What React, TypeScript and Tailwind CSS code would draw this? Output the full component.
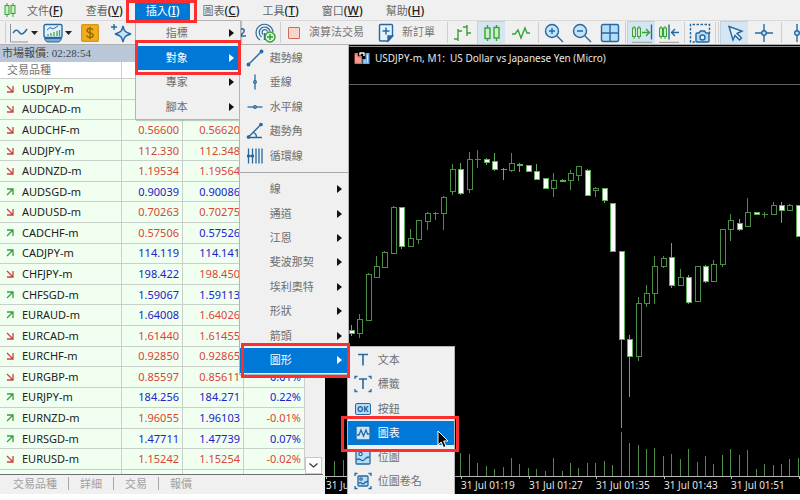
import type { ReactNode } from "react";

type Dir = "up" | "down";

interface Quote {
  symbol: string;
  dir: Dir;
  bid?: [string, Dir];
  ask?: [string, Dir];
  change?: [string, Dir];
}

const quotes: Quote[] = [
  { symbol: "USDJPY-m", dir: "down" },
  { symbol: "AUDCAD-m", dir: "down" },
  { symbol: "AUDCHF-m", dir: "down", bid: ["0.56600", "down"], ask: ["0.56620", "down"] },
  { symbol: "AUDJPY-m", dir: "down", bid: ["112.330", "down"], ask: ["112.348", "down"] },
  { symbol: "AUDNZD-m", dir: "down", bid: ["1.19534", "down"], ask: ["1.19564", "down"] },
  { symbol: "AUDSGD-m", dir: "up", bid: ["0.90039", "up"], ask: ["0.90086", "up"] },
  { symbol: "AUDUSD-m", dir: "down", bid: ["0.70263", "down"], ask: ["0.70275", "down"] },
  { symbol: "CADCHF-m", dir: "up", bid: ["0.57506", "down"], ask: ["0.57526", "up"] },
  { symbol: "CADJPY-m", dir: "up", bid: ["114.119", "up"], ask: ["114.141", "up"] },
  { symbol: "CHFJPY-m", dir: "down", bid: ["198.422", "up"], ask: ["198.450", "down"] },
  { symbol: "CHFSGD-m", dir: "up", bid: ["1.59067", "up"], ask: ["1.59113", "up"] },
  { symbol: "EURAUD-m", dir: "up", bid: ["1.64008", "up"], ask: ["1.64026", "down"] },
  { symbol: "EURCAD-m", dir: "down", bid: ["1.61440", "down"], ask: ["1.61455", "down"] },
  { symbol: "EURCHF-m", dir: "down", bid: ["0.92850", "down"], ask: ["0.92865", "down"] },
  { symbol: "EURGBP-m", dir: "down", bid: ["0.85597", "down"], ask: ["0.85611", "down"], change: ["0.01%", "up"] },
  { symbol: "EURJPY-m", dir: "up", bid: ["184.256", "up"], ask: ["184.271", "up"], change: ["0.22%", "up"] },
  { symbol: "EURNZD-m", dir: "up", bid: ["1.96055", "down"], ask: ["1.96103", "up"], change: ["-0.01%", "down"] },
  { symbol: "EURSGD-m", dir: "up", bid: ["1.47711", "up"], ask: ["1.47739", "up"], change: ["0.07%", "up"] },
  { symbol: "EURUSD-m", dir: "down", bid: ["1.15242", "down"], ask: ["1.15254", "down"], change: ["-0.02%", "down"] },
];

// high, body top, body bottom, low, 1 = bearish (filled)
const candles = [
  [325, 330, 333, 336, 1], [314, 319, 333, 338, 0], [273, 274, 320, 320, 0], [256, 266, 277, 277, 0],
  [251, 252, 267, 267, 0], [206, 207, 253, 254, 0], [207, 207, 246, 249, 1], [229, 238, 246, 247, 0],
  [220, 220, 239, 244, 0], [212, 213, 221, 230, 0], [212, 213, 213, 220, 0], [196, 197, 213, 230, 0],
  [164, 169, 191, 195, 0], [163, 169, 193, 195, 1], [152, 159, 189, 193, 0], [150, 159, 159, 168, 0],
  [158, 159, 162, 165, 1], [153, 161, 169, 171, 1], [168, 169, 169, 180, 1], [153, 163, 170, 172, 0],
  [163, 164, 165, 172, 1], [165, 165, 171, 172, 1], [164, 171, 179, 180, 1], [178, 178, 188, 188, 1],
  [173, 180, 188, 197, 0], [179, 180, 181, 182, 1], [170, 173, 180, 190, 0], [166, 166, 175, 181, 0],
  [169, 170, 195, 196, 1], [187, 188, 190, 197, 0], [188, 188, 200, 203, 1], [203, 203, 251, 251, 1],
  [251, 251, 339, 428, 1], [335, 339, 356, 397, 1], [297, 303, 356, 361, 0], [285, 293, 303, 307, 0],
  [256, 266, 293, 304, 0], [256, 258, 266, 268, 0], [243, 257, 285, 288, 1], [269, 277, 285, 286, 0],
  [275, 277, 302, 304, 1], [266, 266, 301, 302, 0], [265, 266, 281, 283, 1], [260, 264, 281, 281, 0],
  [229, 229, 264, 267, 0], [214, 220, 229, 241, 0], [219, 223, 229, 231, 1], [198, 212, 226, 226, 0],
  [212, 212, 214, 214, 1], [212, 214, 214, 218, 0], [202, 205, 214, 214, 0], [202, 205, 210, 223, 1],
  [204, 205, 210, 210, 0], [205, 205, 236, 236, 1],
];

// tick volume, starting at candle 13
const volumes = [
  23, 22, 13, 10, 7, 9, 18, 12, 8, 7, 5, 18, 5, 13, 8, 13, 13, 15, 11, 44, 33, 31, 27, 28, 20, 22, 17, 27, 14,
  20, 12, 21, 27, 21, 26, 7, 12, 11, 12, 17, 18,
];

// every eighth candle gets a tick, an empty string leaves it unlabelled
const times = ["01:03", "", "01:19", "01:27", "01:35", "01:43", "01:51", ""];

const CHART_X = 325;
const CHART_Y = 45;
const AXIS_Y = 476 - CHART_Y;
const STEP = 8.436;

function candleX(i: number) {
  return Math.round(351.7 - CHART_X + i * STEP) - 0.5;
}

function Chart() {
  return (
    <section className="relative min-w-0 flex-1 overflow-hidden bg-black">
      <div className="h-[2px] border-b border-[#8a8a8a]" />
      <header className="flex h-[22px] items-center gap-[5px] pl-[29px] text-[10px] text-[#e8e8e8]">
        <svg width="16" height="13" viewBox="0 0 16 13">
          <path d="M0.500 1h3.500v3h4v8H0.500z" fill="#e8655c" />
          <path d="M2 2.500v8M4 5v6M6 6v5" stroke="#fbd5d0" strokeWidth="1" />
          <path d="M11.500 1h4v11H8.500V7h3z" fill="#6ea9e0" />
          <path d="M13.500 2.500v8M11 8v3" stroke="#d8ecfb" strokeWidth="1" />
          <path d="M5.500 1h5M6 1v2.500M10 1v3" stroke="#f4f4f4" strokeWidth="1.500" />
        </svg>
        <span className="whitespace-pre">USDJPY-m, M1:  US Dollar vs Japanese Yen (Micro)</span>
      </header>
      <svg className="absolute inset-0 h-full w-full" shapeRendering="crispEdges">
        <path d="M0 39.500H2000" stroke="#5c625c" />
        <path d={`M0 ${AXIS_Y + 0.5}H2000`} stroke="#b8b8b8" />
        {candles.map(([high, top, bottom, low, filled], i) => {
          const x = candleX(i);
          return (
            <g key={i} stroke={filled ? "#5fae58" : "#4b8f45"} fill={filled ? "#fff" : "#000"}>
              <path d={`M${x} ${high - CHART_Y}V${low - CHART_Y}`} />
              {top === bottom ? (
                <path d={`M${x - 2.5} ${top - CHART_Y + 0.5}h6`} />
              ) : (
                <rect x={x - 2.5} y={top - CHART_Y + 0.5} width="5" height={bottom - top} />
              )}
            </g>
          );
        })}
        {volumes.map((v, i) => (
          <path key={i} d={`M${candleX(i + 13)} ${AXIS_Y}v${-v}`} stroke="#4d8c47" />
        ))}
        <path d={`M9.500 ${AXIS_Y}v-15M18.500 ${AXIS_Y}v-16`} stroke="#4d8c47" />
        <g fill="#e4e4e4" fontSize="10">
          {times.map(
            (t, i) =>
              t && (
                <text key={t} x={Math.round(1 + i * 67.5)} y="444">
                  31 Jul {t}
                </text>
              ),
          )}
        </g>
        <path
          d={times.map((_, i) => `M${Math.round(1 + i * 67.5) + 0.5} ${AXIS_Y}v3`).join("")}
          stroke="#b8b8b8"
        />
      </svg>
    </section>
  );
}

function TrendArrow({ dir }: { dir: Dir }) {
  return dir === "up" ? (
    <svg width="8" height="8" viewBox="0 0 8 8" fill="none" stroke="#3c9c3c" strokeWidth="1.300">
      <path d="M1 7l6-6M1 1h6v6" />
    </svg>
  ) : (
    <svg width="8" height="8" viewBox="0 0 8 8" fill="none" stroke="#cf4040" strokeWidth="1.300">
      <path d="M1 1l6 6M7 1v6H1" />
    </svg>
  );
}

function PriceCell({ value }: { value?: [string, Dir] }) {
  return (
    <td
      className={`border-r border-b border-[#c9cfc9] p-0 pr-[3px] text-right ${
        value?.[1] === "up" ? "text-[#2222c8]" : "text-[#dc4438]"
      }`}
    >
      {value?.[0]}
    </td>
  );
}

function MarketWatch() {
  return (
    <section className="w-[325px] shrink-0 bg-[#f0f0f0] pr-[2px]">
      <h2 className="h-[17px] bg-[#b9c7d9] pl-[2px] font-['Liberation_Serif','Noto_Sans_CJK_TC',serif] text-[11px] leading-[17px] text-[#444]">
        市場報價: 02:28:54
      </h2>
      <div className="flex border-b border-[#707070]">
        <div className="flex-1 bg-[#f0fff0]">
          <table className="h-[408px] w-full table-fixed border-separate border-spacing-0 text-[11px] leading-[14px]">
            <colgroup>
              <col className="w-[122px]" />
              <col className="w-[61px]" />
              <col className="w-[61px]" />
              <col />
            </colgroup>
            <thead className="bg-white">
              <tr className="h-[17px]">
                <th className="border-r border-b border-[#c9cfc9] p-0 pl-[7px] text-left font-normal text-[#777]">
                  交易品種
                </th>
                <th className="border-b border-[#c9cfc9] p-0" />
                <th className="border-b border-[#c9cfc9] p-0" />
                <th className="border-b border-[#c9cfc9] p-0" />
              </tr>
            </thead>
            <tbody>
              {quotes.map((q) => (
                <tr key={q.symbol}>
                  <td className="border-r border-b border-[#c9cfc9] p-0 pl-[6px] text-[#222]">
                    <div className="flex items-center gap-2">
                      <TrendArrow dir={q.dir} />
                      {q.symbol}
                    </div>
                  </td>
                  <PriceCell value={q.bid} />
                  <PriceCell value={q.ask} />
                  <PriceCell value={q.change} />
                </tr>
              ))}
            </tbody>
          </table>
          <div className="grid h-[4px] grid-cols-[122px_61px_61px_1fr] divide-x divide-[#c9cfc9]">
            <i />
            <i />
            <i />
            <i />
          </div>
        </div>
        <div className="flex w-[18px] items-end">
          <button
            aria-label="向下捲動"
            className="flex h-[17px] w-[17px] items-center justify-center border border-[#c8c8c8] bg-white"
          >
            <svg width="9" height="5" viewBox="0 0 9 5" fill="none" stroke="#333" strokeWidth="1.200">
              <path d="M0.500 0.500l4 3.500 4-3.500" />
            </svg>
          </button>
        </div>
      </div>
      <div className="flex h-[19px] items-center divide-x divide-[#a8a8a8] pb-[2px] pl-[2px] text-[11px] leading-[13px] text-[#a0a0a0]">
        {["交易品種", "詳細", "交易", "報價"].map((t) => (
          <button key={t} className="px-[11px]">
            {t}
          </button>
        ))}
      </div>
    </section>
  );
}

function Highlight({ className }: { className: string }) {
  return <span className={`pointer-events-none absolute z-30 border-3 border-[#fb2f2f] ${className}`} />;
}

function MenuItem({
  label,
  icon,
  arrow,
  active,
  children,
}: {
  label: string;
  icon?: ReactNode;
  arrow?: boolean;
  active?: boolean;
  children?: ReactNode;
}) {
  return (
    <li className="relative flex-1">
      <button
        className={`flex h-full w-full items-center pr-[6px] text-left ${
          active ? "bg-[#0078d7] text-white" : "text-[#6e6e6e]"
        }`}
      >
        <span className="flex w-[30px] justify-center">{icon}</span>
        <span className="flex-1">{label}</span>
        {arrow && (
          <svg width="5" height="8" viewBox="0 0 5 8" fill={active ? "#fff" : "#111"}>
            <path d="M0 0l5 4-5 4z" />
          </svg>
        )}
      </button>
      {children}
    </li>
  );
}

const menuClass =
  "absolute z-20 flex flex-col border border-[#b4b4b4] bg-[#f0f0f0] text-[11px] leading-[14px] shadow-[1px_1px_1px_rgba(0,0,0,0.2)]";

function Draw({ children }: { children: ReactNode }) {
  return (
    <svg width="18" height="18" viewBox="0 0 18 18" fill="none" stroke="#27689f" strokeWidth="1.300">
      {children}
    </svg>
  );
}

const trendLine = (
  <Draw>
    <path d="M3 15L15 3" />
    <g fill="#27689f">
      <circle cx="2.500" cy="15.500" r="1.300" />
      <circle cx="15.500" cy="2.500" r="1.300" />
    </g>
  </Draw>
);

const verticalLine = (
  <Draw>
    <path d="M9 1.500v15" />
    <circle cx="9" cy="9" r="1.300" fill="#9cc8ec" />
  </Draw>
);

const horizontalLine = (
  <Draw>
    <path d="M1.500 9h15" />
    <circle cx="9" cy="9" r="1.300" fill="#9cc8ec" />
  </Draw>
);

const angleLine = (
  <Draw>
    <path d="M2.500 15L15 2.500M2 15.500h14M7.500 10.500c2 .8 3 2.500 3 5" />
    <g fill="#27689f">
      <circle cx="2.500" cy="15" r="1.200" />
      <circle cx="15" cy="2.500" r="1.200" />
    </g>
  </Draw>
);

const cycleLines = (
  <Draw>
    <path d="M2.500 1.500v15M6.500 1.500v15M10 1.500v15M13 1.500v15M16 1.500v15M1 9h7" />
    <g fill="#27689f">
      <circle cx="2.500" cy="9" r="1" />
      <circle cx="6.500" cy="9" r="1" />
    </g>
  </Draw>
);

const corners = <path d="M1 4V1.500h2.500M14.500 1.500H17V4M1 14v2.500h2.500M14.500 16.500H17V14" />;

const letterT = (
  <Draw>
    <path d="M4 3.500h10M9 3.500v11" strokeWidth="1.600" />
  </Draw>
);

const labelIcon = (
  <Draw>
    <path d="M5 4h8M9 4v10" strokeWidth="1.600" />
    {corners}
  </Draw>
);

const okIcon = (
  <span className="flex h-[12px] w-[16px] items-center justify-center rounded-[2px] border border-[#27689f] bg-[#b5dcf8] text-[8px] leading-none font-bold text-[#1f5f96]">
    OK
  </span>
);

const chartIcon = (
  <Draw>
    <rect x="2" y="2" width="14" height="14" rx="1" fill="#c8e6fb" />
    <path d="M3 11h2l2-5 2.500 6 2.500-6 1.500 4H15" />
  </Draw>
);

const bitmapIcon = (
  <Draw>
    <rect x="2" y="2" width="14" height="14" rx="1" fill="#b5dcf8" />
    <circle cx="6.500" cy="6" r="1.600" fill="#fff" />
    <path d="M2.500 12c2-2 3-1 4.500 0s3 .5 4-1 3-2 4.500-2" />
  </Draw>
);

const bitmapLabelIcon = (
  <Draw>
    <rect x="4" y="4" width="10" height="10" rx="1" fill="#b5dcf8" />
    <circle cx="7" cy="7" r="1.200" fill="#fff" />
    <path d="M4.500 11.500c1.500-1.500 2.500-1 3.500 0s2 0 3-1 2-1 3-1" />
    {corners}
  </Draw>
);

function InsertMenu() {
  return (
    <ul className={`${menuClass} top-full left-0 h-[100px] w-[106px]`}>
      <MenuItem label="指標" arrow />
      <MenuItem label="對象" arrow active>
        <Highlight className="-top-[6px] -right-[1px] -left-[1px] h-[35px]" />
        <ul className={`${menuClass} -top-[2px] left-[103px] h-[331px] w-[110px] py-[1px]`}>
          <MenuItem label="趨勢線" icon={trendLine} />
          <MenuItem label="垂線" icon={verticalLine} />
          <MenuItem label="水平線" icon={horizontalLine} />
          <MenuItem label="趨勢角" icon={angleLine} />
          <MenuItem label="循環線" icon={cycleLines} />
          <li className="my-[4px] border-t border-[#a8a8a8]" />
          <MenuItem label="線" arrow />
          <MenuItem label="通道" arrow />
          <MenuItem label="江恩" arrow />
          <MenuItem label="斐波那契" arrow />
          <MenuItem label="埃利奧特" arrow />
          <MenuItem label="形狀" arrow />
          <MenuItem label="箭頭" arrow />
          <MenuItem label="圖形" arrow active>
            <Highlight className="-top-[5px] -right-[2px] left-[1px] h-[35px]" />
            <ul className={`${menuClass} -top-[2px] left-[107px] h-[149px] w-[108px] py-[1px]`}>
              <MenuItem label="文本" icon={letterT} />
              <MenuItem label="標籤" icon={labelIcon} />
              <MenuItem label="按鈕" icon={okIcon} />
              <MenuItem label="圖表" icon={chartIcon} active>
                <Highlight className="-top-[5px] -right-[5px] -left-[7px] h-[36px]" />
                <svg
                  width="12"
                  height="19"
                  viewBox="0 0 12 19"
                  className="absolute top-[9px] left-[89px] z-40"
                  fill="#000"
                  stroke="#fff"
                >
                  <path d="M1 1v14l3.200-3 2.300 5.500 2.500-1-2.300-5.500H11z" />
                </svg>
              </MenuItem>
              <MenuItem label="位圖" icon={bitmapIcon} />
              <MenuItem label="位圖卷名" icon={bitmapLabelIcon} />
            </ul>
          </MenuItem>
        </ul>
      </MenuItem>
      <MenuItem label="專家" arrow />
      <MenuItem label="腳本" arrow />
    </ul>
  );
}

const menus = [
  ["文件", "F"],
  ["查看", "V"],
  ["插入", "I"],
  ["圖表", "C"],
  ["工具", "T"],
  ["窗口", "W"],
  ["幫助", "H"],
];

function MenuBar() {
  return (
    <nav className="flex h-[20px] items-stretch pl-[4px] text-[11px] leading-[16px] text-[#666]">
      <svg width="12" height="14" viewBox="0 0 12 14" fill="#c8f0c2" stroke="#36a336" className="mt-[3px]">
        <path d="M3 0v14M9 0v14" />
        <rect x="1" y="2.500" width="4" height="9" />
        <rect x="7" y="2.500" width="4" height="8" />
      </svg>
      <div className="flex gap-px">
        {menus.map(([label, key]) => {
          const open = key === "I";
          return (
            <div key={key} className="relative pt-[2px]">
              <button className={`h-full px-[11px] whitespace-nowrap ${open ? "bg-[#0078d7] text-white" : ""}`}>
                {label}
                <span className={`text-[12px] font-medium ${open ? "" : "text-[#222]"}`}>
                  (<u>{key}</u>)
                </span>
              </button>
              {open && <Highlight className="top-0 -right-[7px] -left-[9px] h-[23px]" />}
              {open && <InsertMenu />}
            </div>
          );
        })}
      </div>
    </nav>
  );
}

function Tool({
  label,
  active,
  className = "w-[28px]",
  children,
}: {
  label: string;
  active?: boolean;
  className?: string;
  children: ReactNode;
}) {
  return (
    <button
      aria-label={label}
      className={`flex h-[23px] shrink-0 items-center justify-center ${className} ${
        active ? "border-t border-l border-[#c2d3e0] bg-[#d5e6f2]" : ""
      }`}
    >
      {children}
    </button>
  );
}

function Separator() {
  return <span className="mx-[1px] h-[21px] w-px shrink-0 bg-[#cfcfcf]" />;
}

function Caret() {
  return (
    <svg width="7" height="4" viewBox="0 0 7 4" className="ml-[2px]">
      <path d="M0 0h7L3.500 4z" fill="#222" />
    </svg>
  );
}

function Icon({ w = 20, color = "#27689f", children }: { w?: number; color?: string; children: ReactNode }) {
  return (
    <svg width={w} height="20" viewBox={`0 0 ${w} 20`} fill="none" stroke={color} strokeWidth="1.400">
      {children}
    </svg>
  );
}

function Toolbar() {
  return (
    <div className="flex h-[25px] items-center overflow-hidden border-t border-b border-t-[#dadada] border-b-[#b0b0b0] pl-[4px] text-[11px] text-[#777]">
      <Separator />
      <Tool label="線形圖" className="w-[32px]">
        <Icon>
          <path d="M1.500 1v18H19" stroke="#8c959c" strokeWidth="1" />
          <path d="M4 10c2-3 4-4 6-1s4 3 8-3" />
        </Icon>
        <Caret />
      </Tool>
      <Tool label="市場" className="w-[37px]">
        <Icon>
          <rect x="1" y="1.500" width="18" height="13" rx="1.500" fill="#e3f2fc" />
          <path d="M1.500 15.500c1 3 2 3.500 4 3.500h9c2 0 3-.5 4-3.500z" fill="#7fa9c9" strokeWidth="1" />
          <path d="M4 7l3-2.500 3 1.500 5-3" strokeWidth="1" />
          <path d="M5 13v-2M8 13v-3M11 13v-4M14 13v-5M16.500 13V7" stroke="#35a535" strokeWidth="1.200" />
        </Icon>
        <Caret />
      </Tool>
      <Tool label="存款">
        <svg width="18" height="18" viewBox="0 0 18 18" fill="none" stroke="#8f6300" strokeWidth="1.300">
          <rect x="0.500" y="0.500" width="17" height="17" rx="2" fill="#f0ad1c" stroke="#d9971a" />
          <path d="M12 6c-.5-1.200-1.600-1.600-3-1.600-1.800 0-3 .8-3 2.200 0 3.200 6.200 1.400 6.200 4.700 0 1.500-1.400 2.300-3.200 2.300-1.700 0-2.800-.7-3.300-2M9 2.800v12.400" />
        </svg>
      </Tool>
      <Tool label="助手" className="w-[34px]">
        <Icon w={22}>
          <path d="M13 3c1 5 2 6.500 8 8-6 1.500-7 3-8 8-1-5-2-6.500-8-8 6-1.500 7-3 8-8z" fill="#c3e4fa" />
          <path d="M4 1v6M1 4h6" />
        </Icon>
      </Tool>
      <Tool label="雲端" className="ml-[87px] w-[26px]">
        <Icon>
          <path d="M12 7c3-3 6 0 3 3l-3 3h6" />
        </Icon>
      </Tool>
      <Tool label="信號">
        <Icon w={22}>
          <path d="M6 17a8.500 8.500 0 1 1 13-8" strokeWidth="1.200" />
          <path d="M7.500 14a5.500 5.500 0 1 1 8.500-6" strokeWidth="1.200" />
          <path d="M9 11.500a2.800 2.800 0 1 1 4.500-3" strokeWidth="1.200" />
          <path d="M10.500 10v7" />
          <circle cx="16" cy="14" r="5" fill="#d9f7d3" stroke="#2f9f38" />
          <path d="M16 11v6M13 14h6" stroke="#2f9f38" />
        </Icon>
      </Tool>
      <Separator />
      <button className="flex shrink-0 items-center gap-[9px] px-[6px] whitespace-nowrap">
        <span className="h-[12px] w-[12px] rounded-[1px] border border-[#cf6b5e] bg-[#f9d4cb]" />
        演算法交易
      </button>
      <button className="ml-[6px] flex shrink-0 items-center gap-[8px] pr-[11px] pl-[2px] whitespace-nowrap">
        <Icon w={16}>
          <path d="M2.500 1.500h11a1 1 0 0 1 1 1V13l-4.500 5H2.500a1 1 0 0 1-1-1V2.500a1 1 0 0 1 1-1z" fill="#e3f2fc" />
          <path d="M14.500 13H10v5z" fill="#27689f" />
          <path d="M8 4.500v7M4.500 8h7" />
        </Icon>
        新訂單
      </button>
      <Separator />
      <Tool label="柱狀圖">
        <Icon color="#36a336">
          <path d="M5 6v12M1 16h4M5 8h4M14 2v11M10 4h4M14 10h4" />
        </Icon>
      </Tool>
      <Tool label="蠟燭圖" active>
        <Icon color="#36a336">
          <path d="M5.500 2v16M14.500 2v16" />
          <rect x="3" y="5" width="5" height="10.500" fill="#c8f0c2" />
          <rect x="12" y="4.500" width="5" height="10.500" fill="#c8f0c2" />
        </Icon>
      </Tool>
      <Tool label="折線圖" className="w-[32px]">
        <Icon color="#36a336">
          <path d="M1 11h3l3-4 3 8 4-10 2 5h3" />
        </Icon>
      </Tool>
      <Separator />
      <Tool label="放大">
        <Icon>
          <circle cx="8" cy="8" r="6.500" fill="#c3e4fa" />
          <path d="M13 13l6 6M8 5v6M5 8h6" />
        </Icon>
      </Tool>
      <Tool label="縮小">
        <Icon>
          <circle cx="8" cy="8" r="6.500" fill="#c3e4fa" />
          <path d="M13 13l6 6M5 8h6" />
        </Icon>
      </Tool>
      <Tool label="平鋪">
        <Icon>
          <rect x="1.500" y="1.500" width="17" height="17" rx="1.500" fill="#b5dcf8" />
          <path d="M10 1.500v17M1.500 10h17" />
        </Icon>
      </Tool>
      <Separator />
      <Tool label="自動捲動" active>
        <Icon w={22} color="#36a336">
          <path d="M3 3v13M8 3v13" strokeWidth="1" />
          <rect x="1.500" y="5" width="3" height="8.500" fill="#c8f0c2" strokeWidth="1" />
          <rect x="6.500" y="5" width="3" height="8.500" fill="#c8f0c2" strokeWidth="1" />
          <path d="M11 9.500h7M15 6l3.500 3.500L15 13" />
          <path d="M20.500 1.500v15" stroke="#27689f" />
          <path d="M1 19.300h20" stroke="#999" strokeWidth="1" />
        </Icon>
      </Tool>
      <Tool label="圖表平移">
        <Icon w={22} color="#36a336">
          <path d="M3 3v13M7 3v13" strokeWidth="1" />
          <rect x="1.500" y="5" width="3" height="8.500" fill="#c8f0c2" strokeWidth="1" />
          <rect x="5.500" y="5" width="3" height="8.500" fill="#c8f0c2" strokeWidth="1" />
          <path d="M11 1.500v15M21 9.500h-7M17 6l-3.500 3.500L17 13" stroke="#27689f" />
          <path d="M1 19.300h20" stroke="#999" strokeWidth="1" />
        </Icon>
      </Tool>
      <Separator />
      <Tool label="截圖">
        <Icon w={22}>
          <path d="M6 19H1.500V1.500h19V12" strokeDasharray="2.500 1.500" />
          <path d="M7 11a1 1 0 0 1 1-1h2l1.500-2h4l1.500 2h2a1 1 0 0 1 1 1v7a1 1 0 0 1-1 1H8a1 1 0 0 1-1-1z" fill="#b5dcf8" />
          <circle cx="13.500" cy="14.500" r="2.500" fill="#e9f5fd" />
        </Icon>
      </Tool>
      <Separator />
      <Separator />
      <Tool label="游標" active>
        <Icon>
          <path d="M4 3.500l13 4.500-5 2.500 4.500 4.500-2 2-4.500-4.500-2 4.500z" fill="#e3f2fc" />
        </Icon>
      </Tool>
      <Tool label="十字準線" className="w-[32px]">
        <Icon>
          <path d="M10 1v18M1 10h18" />
          <circle cx="10" cy="10" r="2.300" fill="#c3e4fa" />
        </Icon>
      </Tool>
      <Separator />
      <Tool label="垂線">
        <Icon>
          <path d="M10 1v18" />
          <circle cx="10" cy="10" r="2.300" fill="#c3e4fa" />
        </Icon>
      </Tool>
    </div>
  );
}

export default function App() {
  return (
    <div className="bg-white">
      <div className="relative overflow-hidden bg-[#f0f0f0] font-['Noto_Sans','Noto_Sans_CJK_TC',sans-serif]">
        <MenuBar />
        <Toolbar />
        <main className="flex items-stretch">
          <MarketWatch />
          <Chart />
        </main>
      </div>
    </div>
  );
}
